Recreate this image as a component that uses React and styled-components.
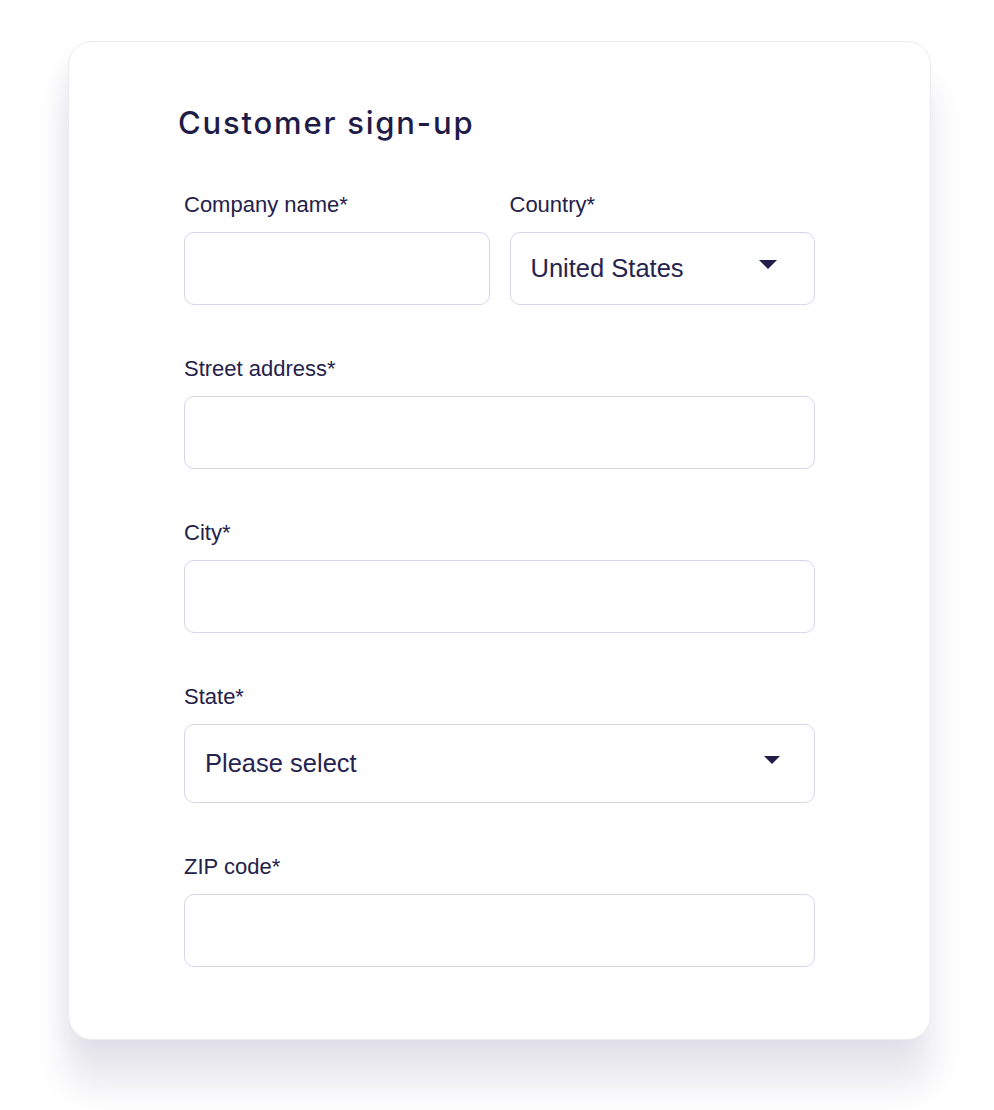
import React from 'react';
import styled, { createGlobalStyle } from 'styled-components';

const GlobalStyle = createGlobalStyle`
    body {
        margin: 0;
        background: #fff;
        font-family: "Liberation Sans", Arial, sans-serif;
        color: #221f47;
    }
`;

const Page = styled.div`
    padding: 41px 0 72px 68px;
`;

const Card = styled.div`
    width: 863px;
    box-sizing: border-box;
    background: #fff;
    border: 1px solid #ebebf0;
    border-radius: 24px;
    padding: 63px 115px 72px 115px;
    box-shadow: 0 44px 34px 2px rgba(38, 34, 88, 0.1), -8px 12px 20px rgba(38, 34, 88, 0.035);
`;

const Title = styled.h1`
    margin: 0 0 51px -6px;
    font-family: Inter, "Noto Sans", sans-serif;
    font-weight: 500;
    font-size: 31px;
    line-height: 36px;
    color: #1f1c47;
    letter-spacing: 1.8px;
`;

const Form = styled.form`
    display: flex;
    flex-direction: column;
    gap: 51px;
`;

const Row = styled.div`
    display: flex;
    gap: 20px;
`;

const Field = styled.div`
    flex: 1;
    display: flex;
    flex-direction: column;
    gap: 14px;
`;

const Label = styled.label`
    font-size: 22px;
    line-height: 26px;
    color: #24214a;
`;

const Input = styled.input`
    box-sizing: border-box;
    height: 73px;
    width: 100%;
    border: 1.5px solid #d8d5ea;
    border-radius: 10px;
    background: #fff;
    outline: none;
    padding: 0 20px;
    font-family: "Liberation Sans", Arial, sans-serif;
    font-size: 25px;
    color: #24214a;
`;

const Select = styled.div`
    box-sizing: border-box;
    height: ${p => p.$tall ? 79 : 73}px;
    border: 1.5px solid #d8d5ea;
    border-radius: 10px;
    background: #fff;
    display: flex;
    align-items: center;
    justify-content: space-between;
    padding: 0 ${p => p.$tall ? 34 : 37}px 0 20px;
    font-size: 25.5px;
    color: #262350;
    cursor: pointer;
`;

const Caret = ({ size = 18 }) => (
    <svg width={size} height={size / 2} viewBox="0 0 18 9" style={{ marginTop: -8 }}>
        <path d="M0 0 H18 L9 9 Z" fill="#211e4a" />
    </svg>
);

const App = () => {
    return (
        <Page>
            <GlobalStyle />
            <Card>
                <Title>Customer sign-up</Title>
                <Form onSubmit={(e) => e.preventDefault()}>
                    <Row>
                        <Field>
                            <Label htmlFor="company">Company name*</Label>
                            <Input id="company" type="text" />
                        </Field>
                        <Field>
                            <Label>Country*</Label>
                            <Select>
                                <span>United States</span>
                                <Caret />
                            </Select>
                        </Field>
                    </Row>
                    <Field>
                        <Label htmlFor="street">Street address*</Label>
                        <Input id="street" type="text" />
                    </Field>
                    <Field>
                        <Label htmlFor="city">City*</Label>
                        <Input id="city" type="text" />
                    </Field>
                    <Field>
                        <Label>State*</Label>
                        <Select $tall>
                            <span>Please select</span>
                            <Caret size={16} />
                        </Select>
                    </Field>
                    <Field>
                        <Label htmlFor="zip">ZIP code*</Label>
                        <Input id="zip" type="text" />
                    </Field>
                </Form>
            </Card>
        </Page>
    );
};

export default App;
